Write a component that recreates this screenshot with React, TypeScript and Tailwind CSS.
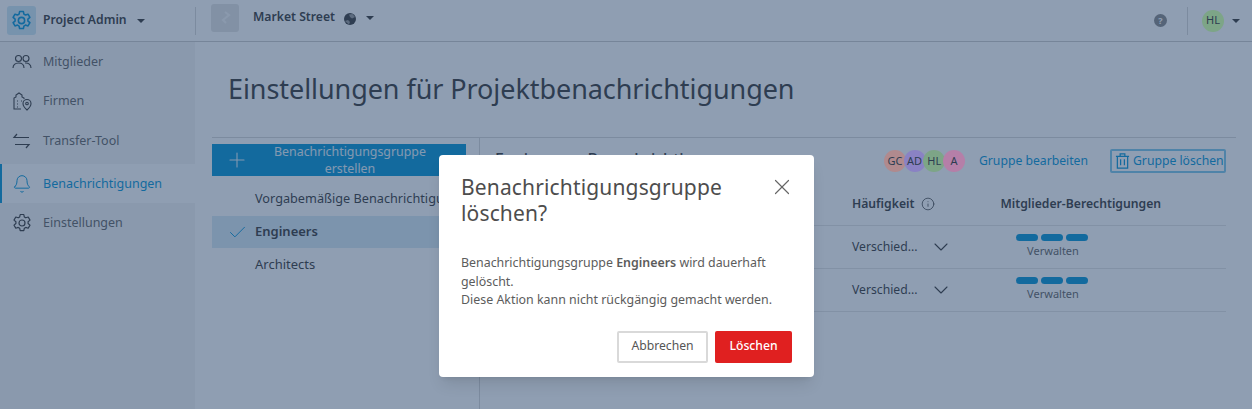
import React from "react";
import { Bell, Check, ChevronDown, Info, Plus, X } from "lucide-react";

const font = { fontFamily: '"Noto Sans", sans-serif' };

const Caret = ({ className = "" }: { className?: string }) => (
  <span className={"inline-block w-0 h-0 border-l-[4px] border-r-[4px] border-t-[4px] border-l-transparent border-r-transparent border-t-[#3c3c3c] " + className} />
);

const Gear = ({ className = "", width = 1.2 }: { className?: string; width?: number }) => (
  <svg viewBox="0 0 20 20" fill="none" stroke="currentColor" strokeWidth={width} strokeLinejoin="round" className={className}>
    <path d="M8.200 1.500h3.600l.5 2.400 1.500.9 2.400-.8 1.800 3.100-1.900 1.600v1.800l1.900 1.600-1.800 3.100-2.400-.8-1.500.9-.5 2.400H8.200l-.5-2.400-1.500-.9-2.400.8-1.800-3.100 1.900-1.600V8.700L2 7.100l1.800-3.100 2.400.8 1.500-.9z" />
    <circle cx="10" cy="10" r="3" />
  </svg>
);

const People = () => (
  <svg viewBox="0 0 20 20" fill="none" stroke="currentColor" strokeWidth="1.100" className="w-5 h-5">
    <circle cx="6.500" cy="6.500" r="3" />
    <circle cx="14" cy="6.500" r="3" />
    <path d="M1 16c0-3 2-5 5.500-5s5.500 2 5.500 5M13 11c3.500-.3 6 1.500 6 5" />
  </svg>
);

const Firm = () => (
  <svg viewBox="0 0 20 20" fill="none" stroke="currentColor" strokeWidth="1.100" className="w-5 h-5">
    <path d="M9 18H2V7l2-1V4l3-2 3 2v2l2 1v1M5 10h1M5 13h1M5 16h1M9 10h1" />
    <path d="M15 19s-4-3.500-4-6.500a4 4 0 0 1 8 0c0 3-4 6.500-4 6.500z" />
    <circle cx="15" cy="12.500" r="1.300" />
  </svg>
);

const Transfer = () => (
  <svg viewBox="0 0 20 20" fill="none" stroke="currentColor" strokeWidth="1.200" className="w-5 h-5">
    <path d="M5 3 2 6.500h15M14 17l3-3.500H3" />
  </svg>
);

const Trash = () => (
  <svg viewBox="0 0 16 18" fill="none" stroke="currentColor" strokeWidth="1.300" className="w-[15px] h-[18px] ml-[3px] mr-[3px] shrink-0">
    <path d="M1 4h14M5.500 4V1.500h5V4M2.500 4v12.500h11V4M6 7v6.500M10 7v6.500" />
  </svg>
);

const Globe = () => (
  <svg viewBox="0 0 12 12" className="w-3 h-3 ml-[9px] mt-[2px]">
    <circle cx="6" cy="6" r="6" fill="#3f3f3f" />
    <path d="M5 1.500 8.500 1 11 4 8 5.500 6 4zM1 8l3-1 2 2-1 2.500z" fill="#9a9a9a" />
  </svg>
);

const NavItem = ({ icon, label, active }: { icon: React.ReactNode; label: string; active?: boolean }) => (
  <div className={"h-[39px] flex items-center text-[12.5px] " + (active ? "bg-white border-l-2 border-[#0696d7] text-[#0696d7] pl-[10px]" : "pl-3 text-[#666666]")}>
    <span className={"w-5 h-5 flex items-center justify-center " + (active ? "text-[#0696d7]" : "text-[#3c3c3c]")}>{icon}</span>
    <span className="ml-[11px] pt-[2px]">{label}</span>
  </div>
);

// sits above the dim layer, these colours are already the dimmed ones
const Avatar = ({ text, color }: { text: string; color: string }) => (
  <span className={"relative z-10 w-[22px] h-[22px] -ml-[2.3px] first:ml-0 rounded-full flex items-center justify-center text-[11px] text-[#2d3d51] " + color}>{text}</span>
);

const Row = () => (
  <div className="h-[43px] border-b border-[#e5e5e5] flex items-center">
    <span className="ml-[357px] w-[69px] text-[12.2px] text-[#3c3c3c]">Verschied...</span>
    <ChevronDown className="w-6 h-6 ml-[8px] text-[#3c3c3c]" strokeWidth={1.100} />
    <div className="ml-[63px] w-[71px] flex flex-col items-center -mt-[2px]">
      <div className="flex gap-[3px]">
        <span className="w-[22px] h-[7px] rounded-full bg-[#0696d7]" />
        <span className="w-[22px] h-[7px] rounded-full bg-[#0696d7]" />
        <span className="w-[22px] h-[7px] rounded-full bg-[#0696d7]" />
      </div>
      <span className="text-[11px] leading-[15px] text-[#666666] mt-[2px] pl-[3px]">Verwalten</span>
    </div>
  </div>
);

export default function App() {
  return (
    <div style={font} className="relative w-[1252px] h-[409px] overflow-hidden bg-white">
      <header className="h-[42px] border-b border-[#cccccc] flex items-center">
        <div className="w-[195px] flex items-center pl-[7px] h-full">
          <span className="w-[29px] h-[29px] rounded-[3px] bg-[#cfe8f5] text-[#0696d7] flex items-center justify-center">
            <Gear className="w-[21px] h-[21px]" width={1.500} />
          </span>
          <span className="ml-[7px] text-[12.2px] font-semibold text-[#3c3c3c]">Project Admin</span>
          <Caret className="ml-[10px]" />
        </div>
        <div className="h-[28px] w-px bg-[#d9d9d9]" />
        <div className="flex items-center pl-[15px] h-full pb-[6px]">
          <span className="w-[28px] h-[28px] rounded-[3px] bg-[#e5e5e5] flex items-center justify-center text-[#f5f5f5]">
            <svg viewBox="0 0 16 16" className="w-4 h-4" fill="none" stroke="currentColor" strokeWidth="2"><path d="M8 2l4 3-6 5 3 3" /></svg>
          </span>
          <span className="ml-[14px] text-[12.2px] font-semibold text-[#3c3c3c]">Market Street</span>
          <Globe />
          <Caret className="ml-[10px]" />
        </div>
        <div className="ml-auto flex items-center h-full">
          <span className="w-[13px] h-[13px] rounded-full bg-[#8a8a8a] text-white text-[9px] font-bold flex items-center justify-center">?</span>
          <span className="ml-[20px] h-[28px] w-px bg-[#d9d9d9]" />
          <span className="relative z-10 ml-[14px] w-[22px] h-[22px] rounded-full bg-[#7da587] flex items-center justify-center text-[11px] text-[#2d3d51]">HL</span>
          <Caret className="ml-[8px] mr-[12px]" />
        </div>
      </header>

      <div className="flex h-[367px]">
        <aside className="w-[195px] bg-[#f5f5f5] shrink-0">
          <NavItem icon={<People />} label="Mitglieder" />
          <NavItem icon={<Firm />} label="Firmen" />
          <div className="pt-px">
            <NavItem icon={<Transfer />} label="Transfer-Tool" />
          </div>
          <div className="h-[4px]" />
          <NavItem icon={<Bell className="w-5 h-5" strokeWidth={1.200} />} label="Benachrichtigungen" active />
          <NavItem icon={<Gear className="w-5 h-5" />} label="Einstellungen" />
        </aside>

        <main className="flex-1 pl-[17px] pr-4">
          <h1 className="h-[95px] pl-[16px] pt-[29px] text-[27px] leading-[36px] tracking-[-0.07px] text-[#3c3c3c]">Einstellungen für Projektbenachrichtigungen</h1>
          <div className="border-t border-[#d9d9d9] flex h-[272px]">
            <div className="w-[268px] shrink-0 border-r border-[#d9d9d9] pt-[6px]">
              <div className="w-[254px] h-[32px] bg-[#0696d7] flex items-center text-[#e6f4fb] text-[12.4px] leading-[17px]">
                <Plus className="w-6 h-6 ml-[13px] shrink-0" strokeWidth={1.100} />
                <span className="flex-1 text-center pr-[15px]">Benachrichtigungsgruppe erstellen</span>
              </div>
              <div className="w-[254px] h-[40px] pl-[43px] pt-[5px] flex items-center text-[12.7px] text-[#3c3c3c] whitespace-nowrap">Vorgabemäßige Benachrichtigungen</div>
              <div className="w-[254px] h-[32px] bg-[#d9eaf5] flex items-center text-[13px] font-semibold text-[#3c3c3c]">
                <Check className="w-[21px] h-[21px] ml-[15px] mr-[7px] text-[#0696d7]" strokeWidth={1.100} />
                Engineers
              </div>
              <div className="w-[254px] h-[32px] pl-[43px] pt-[2px] flex items-center text-[13px] text-[#3c3c3c]">Architects</div>
            </div>

            <div className="flex-1 pl-[15px] pr-[10px]">
              <div className="h-[46px] flex items-center">
                <span className="-mt-[4px] text-[16px] font-medium text-[#3c3c3c] whitespace-nowrap">Engineers – Benachrichtigungen</span>
                <div className="ml-auto flex items-center">
                  <Avatar text="GC" color="bg-[#b08a8e]" />
                  <Avatar text="AD" color="bg-[#8a82c4]" />
                  <Avatar text="HL" color="bg-[#7da587]" />
                  <Avatar text="A" color="bg-[#b57fa8]" />
                  <span className="ml-[14px] text-[12.2px] text-[#0696d7] whitespace-nowrap">Gruppe bearbeiten</span>
                  <span className="ml-[22px] h-[24px] w-[116px] border-2 border-[#7fc8ea] rounded-[2px] flex items-center text-[12.2px] text-[#0696d7] whitespace-nowrap">
                    <Trash />
                    Gruppe löschen
                  </span>
                </div>
              </div>
              <div className="h-[42px] pb-px border-b border-[#e5e5e5] flex items-center text-[12.2px] font-semibold text-[#3c3c3c]">
                <span className="ml-[357px]">Häufigkeit</span>
                <Info className="w-[14px] h-[14px] ml-[7px]" strokeWidth={1.300} />
                <span className="ml-[65px] whitespace-nowrap">Mitglieder-Berechtigungen</span>
              </div>
              <Row />
              <Row />
            </div>
          </div>
        </main>
      </div>

      <div className="absolute inset-0 bg-[#1f3e66]/50" />

      <div className="absolute z-20 left-[439px] top-[155px] w-[375px] h-[222px] bg-white rounded-[4px] shadow-lg px-[22px] pt-[19px]">
        <div className="flex justify-between">
          <h2 className="w-[290px] text-[21px] leading-[26px] tracking-[0.15px] text-[#4d4d4d]">Benachrichtigungsgruppe löschen?</h2>
          <X className="w-[26px] h-[26px] -mr-[3px] text-[#666666]" strokeWidth={1.100} />
        </div>
        <p className="mt-[28px] text-[12.4px] leading-[18.500px] text-[#5c5c5c]">
          Benachrichtigungsgruppe <span className="font-semibold">Engineers</span> wird dauerhaft gelöscht.
          <br />
          Diese Aktion kann nicht rückgängig gemacht werden.
        </p>
        <div className="mt-[21px] flex justify-end gap-[7px]">
          <span className="w-[91px] h-[32px] border-2 border-[#d9d9d9] rounded-[2px] flex items-center justify-center text-[12.2px] text-[#555555]">Abbrechen</span>
          <span className="w-[77px] h-[32px] bg-[#e02020] rounded-[2px] flex items-center justify-center text-[12.2px] font-medium text-white">Löschen</span>
        </div>
      </div>
    </div>
  );
}
